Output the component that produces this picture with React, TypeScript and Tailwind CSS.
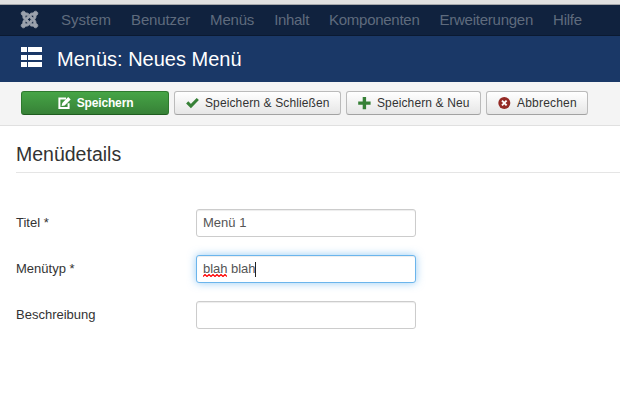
import { useState } from 'react'
import type { ReactNode } from 'react'
import { FaJoomla } from 'react-icons/fa'

const menuItems = [
  { label: 'System', tracking: '' },
  { label: 'Benutzer', tracking: 'tracking-[-0.12px]' },
  { label: 'Menüs', tracking: 'tracking-[-0.2px]' },
  { label: 'Inhalt', tracking: 'tracking-[-0.3px]' },
  { label: 'Komponenten', tracking: 'tracking-[-0.27px]' },
  { label: 'Erweiterungen', tracking: 'tracking-[-0.24px]' },
  { label: 'Hilfe', tracking: 'tracking-[-0.25px]' }
]

function ListIcon() {
  return (
    <svg className="-mt-[3px]" width="21" height="21" viewBox="0 0 21 21" fill="#fff" shapeRendering="crispEdges">
      <path d="M0 0h6v5H0zM7 0h14v5H7zM0 8h6v5H0zM7 8h14v5H7zM0 15h6v5H0zM7 15h14v5H7z" />
    </svg>
  )
}

function EditIcon() {
  return (
    <svg width="13" height="13" viewBox="0 0 13 13">
      <path d="M8 1.5H1.4v9.4h9.2V6.2" fill="none" stroke="#fff" strokeWidth="2" />
      <path d="M3.6 9l.7-3.1L10.2 0l2.5 2.5-6 6z" fill="#fff" />
    </svg>
  )
}

function CheckIcon() {
  return (
    <svg width="13" height="13" viewBox="0 0 13 13">
      <path d="M1.2 5.4l3.7 3.6 6.9-7" fill="none" stroke="#378137" strokeWidth="3.1" />
    </svg>
  )
}

function PlusIcon() {
  return (
    <svg width="13" height="13" viewBox="0 0 13 13" fill="#378137">
      <path d="M4.7 0h3.4v4.4h4.5v3.4H8.1v4.5H4.7V7.8H.2V4.4h4.5z" />
    </svg>
  )
}

function CancelIcon() {
  return (
    <svg width="13" height="13" viewBox="0 0 13 13">
      <circle cx="6.3" cy="6" r="6" fill="#942a25" />
      <path d="M4 3.7l4.6 4.6M8.6 3.7L4 8.3" stroke="#fff" strokeWidth="1.9" />
    </svg>
  )
}

interface ToolbarButtonProps {
  icon: ReactNode
  label: string
  className: string
}

function ToolbarButton({ icon, label, className }: ToolbarButtonProps) {
  return (
    <button
      className={`flex h-6 shrink-0 items-center rounded-[3px] border border-[#bbb] border-b-[#a2a2a2] bg-linear-to-b from-white to-[#e6e6e6] pl-[11px] text-[12px] text-[#333] ${className}`}
    >
      {icon}
      <span className="ml-[6px] whitespace-nowrap">{label}</span>
    </button>
  )
}

interface FieldProps {
  label: string
  focused?: boolean
  children?: ReactNode
}

function Field({ label, focused, children }: FieldProps) {
  return (
    <div className="flex h-7 items-center">
      <label className="w-[180px] text-[13px] text-[#333]">{label}</label>
      <div
        className={`flex h-7 w-[220px] items-center rounded-[3px] border bg-white px-[6px] text-[13px] text-[#555] ${
          focused
            ? 'border-[#6bb5ec] shadow-[inset_0_1px_1px_rgba(0,0,0,0.075),0_0_8px_rgba(82,168,236,0.6)]'
            : 'border-[#ccc] shadow-[inset_0_1px_1px_rgba(0,0,0,0.075)]'
        }`}
      >
        {children}
      </div>
    </div>
  )
}

export default function App() {
  const [title] = useState('Menü 1')

  return (
    <div className="h-[408px] w-[620px] overflow-hidden bg-white font-['Liberation_Sans',Arial,sans-serif]">
      <div className="h-[5px] border-b border-[#a5a7aa] bg-[#e0e0e0]" />

      <nav className="flex h-[31px] items-center border-b border-[#0b1a31] bg-[#10223e] pl-5 text-[15px] text-[#5f6b7d]">
        <FaJoomla className="-mt-[2px] mr-[22px] h-[19px] w-[19px] stroke-current stroke-[22px] text-[#9ba2ad]" />
        <div className="flex gap-5">
          {menuItems.map((item) => (
            <span key={item.label} className={item.tracking}>
              {item.label}
            </span>
          ))}
        </div>
      </nav>

      <header className="flex h-[46px] items-center bg-[#1a3867] pl-[21px]">
        <ListIcon />
        <h1 className="ml-[15px] text-[20px] leading-6 text-white">Menüs: Neues Menü</h1>
      </header>

      <div className="flex h-11 items-start gap-[5px] border-b border-[#e0e0e0] bg-[#f4f4f4] pt-[9px] pl-[21px]">
        <button className="flex h-6 w-[148px] shrink-0 items-center justify-center gap-[6px] rounded-[3px] border border-[#2e7a2e] border-b-[#1f5c1f] bg-linear-to-b from-[#46a546] to-[#378137] pl-px text-[12px] font-bold text-white">
          <EditIcon />
          <span className="tracking-[-0.15px]">Speichern</span>
        </button>
        <ToolbarButton icon={<CheckIcon />} label="Speichern & Schließen" className="w-[167px] tracking-[0.12px]" />
        <ToolbarButton icon={<PlusIcon />} label="Speichern & Neu" className="w-[135px] tracking-[0.12px]" />
        <ToolbarButton icon={<CancelIcon />} label="Abbrechen" className="w-[102px] tracking-[0.2px]" />
      </div>

      <main className="pl-4">
        <h2 className="h-[47px] border-b border-[#e5e5e5] pt-4 text-[19.5px] leading-6 text-[#333]">
          Menüdetails
        </h2>
        <div className="flex flex-col gap-[18px] pt-9">
          <Field label="Titel *">{title}</Field>
          <Field label="Menütyp *" focused>
            {/* the first word carries the spell checker's mark */}
            <span className="relative">
              blah
              <svg className="absolute top-[15px] left-0" width="24" height="3" viewBox="0 0 24 3">
                <path
                  d="M0 2.5l2-2 2 2 2-2 2 2 2-2 2 2 2-2 2 2 2-2 2 2 2-2 2 2"
                  fill="none"
                  stroke="#f00"
                  strokeWidth="1.2"
                />
              </svg>
            </span>
            <span className="tracking-[-0.1px] whitespace-pre"> blah</span>
            <span className="h-[15px] w-px bg-[#222]" />
          </Field>
          <Field label="Beschreibung" />
        </div>
      </main>
    </div>
  )
}
